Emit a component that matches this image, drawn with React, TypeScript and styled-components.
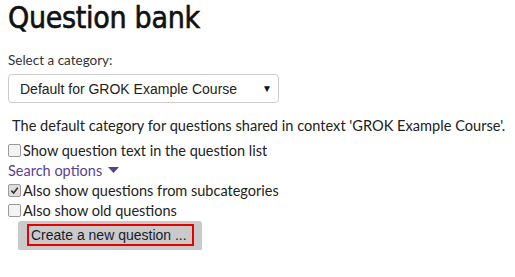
import React, { FC, useState } from 'react';
import styled, { createGlobalStyle } from 'styled-components';

const GlobalStyle = createGlobalStyle`
  html, body {
    margin: 0;
    padding: 0;
    background: #fff;
  }
  body {
    font-family: Lato, "Noto Sans", sans-serif;
    color: #1a1a1a;
  }
`

const Page = styled.div`
  padding: 0 8px;
  display: flex;
  flex-direction: column;
`

const Title = styled.h2`
  margin: 0;
  font-family: "DejaVu Sans Condensed", "DejaVu Sans", sans-serif;
  font-weight: 400;
  font-size: 30px;
  line-height: 36px;
  color: #111;
  letter-spacing: -0.3px;
  -webkit-text-stroke: 0.6px #111;
`

const Label = styled.div`
  margin-top: 15px;
  font-size: 13.5px;
  line-height: 18px;
  color: #333;
  font-weight: 400;
`

const Select = styled.div`
  margin-top: 5px;
  width: 271px;
  height: 29px;
  box-sizing: border-box;
  border: 1px solid #ccc;
  border-radius: 4px;
  display: flex;
  align-items: center;
  justify-content: space-between;
  padding: 0 6px 0 11px;
  font-family: "Liberation Sans", Arial, sans-serif;
  font-size: 14px;
  color: #222;
`

const Caret = styled.span`
  font-size: 10px;
  color: #111;
`

const Description = styled.p`
  margin: 13px 0 4px 4px;
  font-size: 14.6px;
  line-height: 20px;
  color: #222;
  font-weight: 400;
  white-space: nowrap;
`

const Row = styled.label`
  display: flex;
  align-items: center;
  gap: 2px;
  height: 20px;
  font-size: 14.5px;
  color: #222;
`

const Box = styled.span<{ $checked?: boolean }>`
  width: 13px;
  height: 13px;
  box-sizing: border-box;
  border: 1px solid #999;
  border-radius: 2px;
  background: ${(p) => (p.$checked ? '#ddd' : '#f3f3f3')};
  display: inline-flex;
  align-items: center;
  justify-content: center;
`

const Toggle = styled.div`
  display: flex;
  align-items: center;
  gap: 6px;
  height: 20px;
  font-size: 14.5px;
  color: #5b3f8f;
`

const Button = styled.button`
  margin: 1px 0 0 10px;
  align-self: flex-start;
  width: 184px;
  height: 29px;
  border: none;
  border-radius: 3px;
  background: #cacaca;
  box-shadow: 0 1px 1px rgba(0, 0, 0, 0.2);
  padding: 3px 8px 4px 9px;
  display: flex;
`

const ButtonInner = styled.span`
  flex: 1;
  border: 2px solid #e60000;
  font-family: "Liberation Sans", Arial, sans-serif;
  font-size: 14px;
  color: #1a1a2a;
  display: flex;
  align-items: center;
  padding-left: 2px;
`

const Check: FC = () => (
  <svg width="9" height="9" viewBox="0 0 10 10">
    <path d="M1.5 5.2 L4 7.8 L8.6 2" fill="none" stroke="#333" strokeWidth="1.8" />
  </svg>
)

const App: FC = () => {
  const [showText] = useState(false)

  return (
    <>
      <GlobalStyle />
      <Page>
        <Title>Question bank</Title>
        <Label>Select a category:</Label>
        <Select>
          <span>Default for GROK Example Course</span>
          <Caret>▼</Caret>
        </Select>
        <Description>
          The default category for questions shared in context 'GROK Example Course'.
        </Description>
        <Row>
          <Box $checked={showText} />
          Show question text in the question list
        </Row>
        <Toggle>
          Search options
          <svg width="11" height="6" viewBox="0 0 11 6">
            <path d="M0 0 H11 L5.5 6 Z" fill="#5b3f8f" />
          </svg>
        </Toggle>
        <Row>
          <Box $checked>
            <Check />
          </Box>
          Also show questions from subcategories
        </Row>
        <Row>
          <Box />
          Also show old questions
        </Row>
        <Button>
          <ButtonInner>Create a new question ...</ButtonInner>
        </Button>
      </Page>
    </>
  )
}

export default App
